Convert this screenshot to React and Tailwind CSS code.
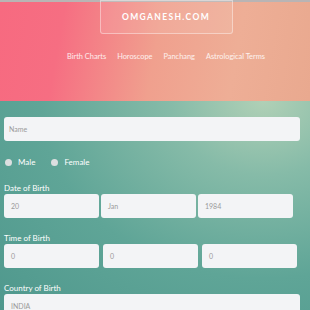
export default function App() {
  const links = ["Birth Charts", "Horoscope", "Panchang", "Astrological Terms"];

  return (
    <div className="w-[310px] h-[310px] overflow-hidden font-['Lato',sans-serif] bg-[#5fa597]">
      {/* Header */}
      <div className="h-[101px] border-t-2 border-[#b9b4b4] bg-[linear-gradient(100deg,#f76a80_0%,#f66e82_20%,#f0a08e_50%,#eeae96_75%,#e9a98f_100%)] flex flex-col items-center">
        <div className="ml-[22px] w-[133px] h-[34px] -mt-[2px] border border-white/40 rounded-b-[3px] bg-white/10 flex items-center justify-center">
          <span className="text-white text-[8.5px] font-bold tracking-[0.16em]">OMGANESH.COM</span>
        </div>
        <div className="ml-[22px] mt-[17px] flex gap-[11px] text-[7.4px] text-white/85">
          {links.map((l) => (
            <span key={l}>{l}</span>
          ))}
        </div>
      </div>

      {/* Form */}
      <div className="h-[209px] px-1 pt-4 bg-[radial-gradient(ellipse_at_85%_0%,#b0d0b6_0%,#86bba8_25%,#5fa597_60%,#4f988d_100%)] text-white">
        <div className="w-[296px] h-[24px] bg-[#f3f4f6] rounded-[3px] flex items-center px-[5px] text-[7px] text-[#9a9a9a]">
          Name
        </div>

        <div className="mt-[15px] ml-[1px] flex items-center text-[8px]">
          <span className="w-[7px] h-[7px] rounded-full bg-[#dcdfe0]" />
          <span className="ml-[6px]">Male</span>
          <span className="ml-[16px] w-[7px] h-[7px] rounded-full bg-[#dcdfe0]" />
          <span className="ml-[6px]">Female</span>
        </div>

        <div className="mt-[15px] text-[8px] leading-[10px]">Date of Birth</div>
        <div className="mt-[1px] flex gap-[2px]">
          {["20", "Jan", "1984"].map((v) => (
            <div key={v} className="w-[95px] h-[24px] bg-[#f3f4f6] rounded-[3px] flex items-center px-[7px] text-[7px] text-[#9a9a9a]">
              {v}
            </div>
          ))}
        </div>

        <div className="mt-[15px] text-[8px] leading-[10px]">Time of Birth</div>
        <div className="mt-[1px] flex gap-[4px]">
          {["h", "m", "s"].map((k) => (
            <div key={k} className="w-[95px] h-[24px] bg-[#f3f4f6] rounded-[3px] flex items-center px-[7px] text-[7px] text-[#9a9a9a]">
              0
            </div>
          ))}
        </div>

        <div className="mt-[15px] text-[8px] leading-[10px]">Country of Birth</div>
        <div className="mt-[1px] w-[296px] h-[24px] bg-[#f3f4f6] rounded-[3px] flex items-center px-[7px] text-[7px] text-[#9a9a9a]">
          INDIA
        </div>
      </div>
    </div>
  );
}
